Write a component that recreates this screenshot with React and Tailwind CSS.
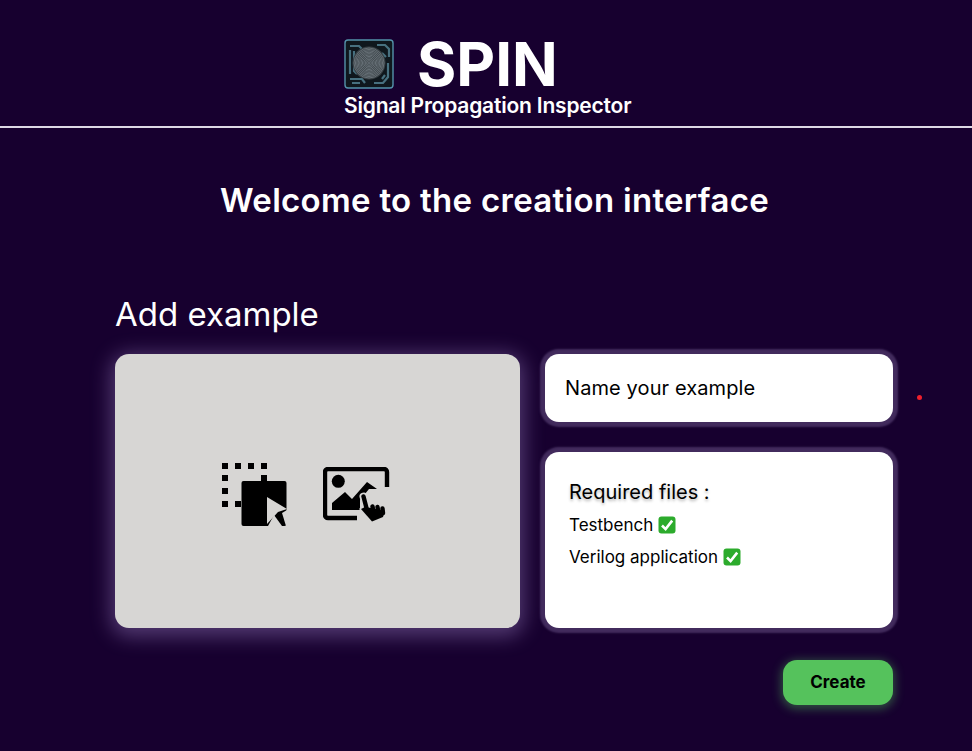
const sans = 'font-["Inter",sans-serif]'
const rings = [15, 13.6, 12.2, 10.8, 9.4, 8, 6.6, 5.2, 3.8, 2.4, 1]

function Logo() {
  return (
    <svg width="50" height="50" viewBox="0 0 50 50" className="shrink-0">
      <rect x="1" y="1" width="48" height="48" rx="3" fill="#0f171d" stroke="#5492aa" strokeWidth="1.4" />
      <g fill="none" stroke="#47707f" strokeWidth="2.2">
        <path d="M6 7h9l3 3M33 6h8l4 4v8M6 11v24M10 12v20l3 3M44 24v14l-5 6H30M6 40h12l3 4M38 14l4 4" />
        <path d="M8 44h8M38 40l3-4" />
      </g>
      <circle cx="25" cy="24" r="16.5" fill="#3a4247" />
      <g fill="none" stroke="#78838a" strokeWidth="0.7">
        {rings.map((r) => <circle key={r} cx="25" cy="24" r={r} />)}
      </g>
    </svg>
  )
}

function DragIcon() {
  return (
    <svg width="66" height="63" viewBox="0 0 66 63" className="shrink-0">
      <g fill="#000">
        <rect x="0" y="0" width="6" height="6" />
        <rect x="13" y="0" width="6" height="6" />
        <rect x="26" y="0" width="6" height="6" />
        <rect x="39" y="0" width="6" height="6" />
        <rect x="0" y="12" width="6" height="6" />
        <rect x="0" y="25" width="6" height="6" />
        <rect x="0" y="38" width="6" height="6" />
        <rect x="39" y="12" width="6" height="6" />
        <rect x="13" y="38" width="6" height="6" />
        <rect x="19.5" y="18" width="45" height="45" rx="2" />
      </g>
      <g fill="#d7d6d4">
        <path d="M45 34L65 46L56 49L45 61Z" />
        <path d="M46 63L52 52L60 63Z" />
        <path d="M60 50L65 47V63H64Z" />
      </g>
    </svg>
  )
}

const handLines = 'M40.5 29.5L44 43M49.5 39.5L50.5 45M54.5 40L55.5 46M59.5 41.5L60 46'

function PickIcon() {
  return (
    <svg width="67" height="55" viewBox="0 0 67 55" className="shrink-0">
      <path d="M64 20V5a3 3 0 0 0-3-3H5a3 3 0 0 0-3 3v43a3 3 0 0 0 3 3h29" fill="none" stroke="#000" strokeWidth="4.4" />
      <circle cx="15.3" cy="14.3" r="6.5" fill="#000" />
      <path d="M9 43V36L22 25L29 32L44 15L54 22H46L37 33V43Z" fill="#000" />
      {/* hand, with a gap cut round it */}
      <path d={handLines} fill="none" stroke="#d7d6d4" strokeWidth="8" strokeLinecap="round" />
      <path d="M38 42L42 39L62 44L60 50L49 54.5L38 44Z" fill="#d7d6d4" stroke="#d7d6d4" strokeWidth="3" />
      <path d={handLines} fill="none" stroke="#000" strokeWidth="4.4" strokeLinecap="round" />
      <path d="M38 42L42 40L48 41L62 44L60 50L49 54.5Z" fill="#000" />
    </svg>
  )
}

function CheckBox() {
  return (
    <svg width="18" height="18" viewBox="0 0 18 18" className="shrink-0">
      <rect x="0.5" y="0.5" width="17" height="17" rx="3" fill="#2cab2c" />
      <path d="M4 9.5l3.6 3.6L14.2 4.6" fill="none" stroke="#fff" strokeWidth="2.6" />
    </svg>
  )
}

export default function App() {
  return (
    <div className={`relative min-h-[751px] overflow-hidden bg-[#17002f] text-white ${sans}`}>
      {/* Header */}
      <header className="h-[128px] border-b-2 border-[#dcd8e4] flex justify-center pt-[34px]">
        <div className="w-[288px] ml-[4px]">
          <div className="flex items-center h-[60px]">
            <Logo />
            <span className="ml-[23px] text-[60px] leading-none font-bold">SPIN</span>
          </div>
          <div className="text-[21px] leading-[24px] font-semibold tracking-[-0.2px] whitespace-nowrap">Signal Propagation Inspector</div>
        </div>
      </header>

      <main className="pl-[115px]">
        <h1 className="mt-[52px] ml-[-115px] text-center text-[33px] leading-[40px] font-semibold tracking-[0.3px] pl-[17px]">Welcome to the creation interface</h1>
        <h2 className="mt-[74px] text-[33px] leading-[40px] font-normal">Add example</h2>

        <div className="mt-[20px] flex gap-[25px] items-start">
          {/* Drop zone */}
          <div className="w-[405px] h-[274px] shrink-0 rounded-[14px] bg-[#d7d6d4] shadow-[0_4px_20px_4px_rgba(170,140,210,0.42)] flex items-center justify-center gap-[35px] pt-[7px] pr-[23px]">
            <DragIcon />
            <PickIcon />
          </div>

          {/* Right column */}
          <div className="w-[348px] shrink-0 flex flex-col gap-[30px] text-black">
            <div className="h-[68px] rounded-[14px] bg-white shadow-[0_0_2px_5px_rgba(110,85,140,0.5)] flex items-center px-[20px] text-[20px] tracking-[0.1px]">
              Name your example
            </div>
            <div className="h-[176px] rounded-[14px] bg-white shadow-[0_0_2px_5px_rgba(110,85,140,0.5)] px-[24px] pt-[27px]">
              <div className="text-[20px] leading-[26px] [text-shadow:0_2px_3px_rgba(0,0,0,0.3)]">Required files :</div>
              <div className="mt-[7px] flex items-center gap-[5px] text-[17px] leading-[26px]">Testbench <CheckBox /></div>
              <div className="mt-[6px] flex items-center gap-[5px] text-[17px] leading-[26px]">Verilog application <CheckBox /></div>
            </div>
            <div className="flex justify-end">
              <button className="w-[110px] h-[45px] mt-[2px] rounded-[14px] bg-[#55c25c] text-black text-[17px] font-bold shadow-[0_2px_10px_2px_rgba(85,194,92,0.4)]">Create</button>
            </div>
          </div>
        </div>
      </main>

      {/* stray marker */}
      <span className="absolute left-[917px] top-[395px] size-[5px] rounded-full bg-[#f01f2c]" />
    </div>
  )
}
